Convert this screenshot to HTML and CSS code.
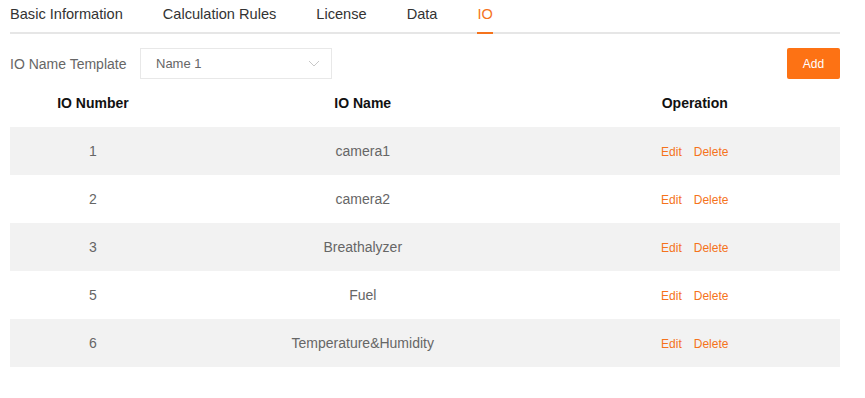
FILE: index.html
```html
<!DOCTYPE html>
<html lang="en">
<head>
  <meta charset="UTF-8" />
  <title>IO</title>
  <link rel="stylesheet" href="styles.css">
</head>
<body>
  <div class="page">
    <div class="tabs">
      <div class="tab">Basic Information</div>
      <div class="tab">Calculation Rules</div>
      <div class="tab">License</div>
      <div class="tab">Data</div>
      <div class="tab active">IO</div>
    </div>

    <div class="toolbar">
      <label class="field-label">IO Name Template</label>
      <div class="select">
        <span>Name 1</span>
        <svg class="arrow" width="12" height="7" viewBox="0 0 12 7"><path d="M1 1 L6 6 L11 1" fill="none" stroke="#c8c8c8" stroke-width="1"/></svg>
      </div>
      <button type="button" class="btn-add">Add</button>
    </div>

    <table class="io-table">
      <thead>
        <tr>
          <th class="col-num">IO Number</th>
          <th class="col-name">IO Name</th>
          <th class="col-op">Operation</th>
        </tr>
      </thead>
      <tbody>
        <tr><td>1</td><td>camera1</td><td><a>Edit</a><a>Delete</a></td></tr>
        <tr><td>2</td><td>camera2</td><td><a>Edit</a><a>Delete</a></td></tr>
        <tr><td>3</td><td>Breathalyzer</td><td><a>Edit</a><a>Delete</a></td></tr>
        <tr><td>5</td><td>Fuel</td><td><a>Edit</a><a>Delete</a></td></tr>
        <tr><td>6</td><td>Temperature&amp;Humidity</td><td><a>Edit</a><a>Delete</a></td></tr>
      </tbody>
    </table>
  </div>
</body>
</html>
```

FILE: styles.css
```css
body { margin: 0; font-family: "Liberation Sans", Arial, sans-serif; background: #fff; color: #333; }
.page { padding: 0 25px 0 10px; }

.tabs {
  display: flex;
  gap: 40px;
  border-bottom: 2px solid #e6e6e6;
}
.tab {
  font-size: 14.6px;
  line-height: 20px;
  padding: 4px 0 8px;
  color: #333;
  margin-bottom: -2px;
  border-bottom: 2px solid transparent;
}
.tab.active {
  color: #f5731c;
  border-bottom-color: #f5731c;
}

.toolbar {
  display: flex;
  align-items: center;
  margin-top: 14px;
  height: 31px;
}
.field-label {
  font-size: 14px;
  color: #666;
  width: 130px;
}
.select {
  width: 192px;
  height: 31px;
  box-sizing: border-box;
  border: 1px solid #e8e8e8;
  display: flex;
  align-items: center;
  justify-content: space-between;
  padding: 0 10px 0 15px;
  font-size: 13px;
  color: #666;
}
.arrow { margin-right: 1px; }
.btn-add {
  margin-left: auto;
  width: 53px;
  height: 31px;
  background: #fd7214;
  color: #fff;
  border: none;
  border-radius: 2px;
  font-family: inherit;
  font-size: 12px;
  padding: 0;
}

.io-table {
  width: 100%;
  border-collapse: collapse;
  table-layout: fixed;
}
.io-table th {
  height: 48px;
  font-size: 14px;
  font-weight: bold;
  color: #111;
  text-align: center;
  padding: 0;
}
.col-num { width: 20%; }
.col-name { width: 45%; }
.col-op { width: 35%; }
.io-table td {
  height: 48px;
  padding: 0;
  text-align: center;
  font-size: 14px;
  color: #666;
}
.io-table tbody tr:nth-child(odd) { background: #f2f2f2; }
.io-table td a {
  font-size: 12px;
  color: #f5731c;
  cursor: pointer;
}
.io-table td a + a { margin-left: 12px; }
```
